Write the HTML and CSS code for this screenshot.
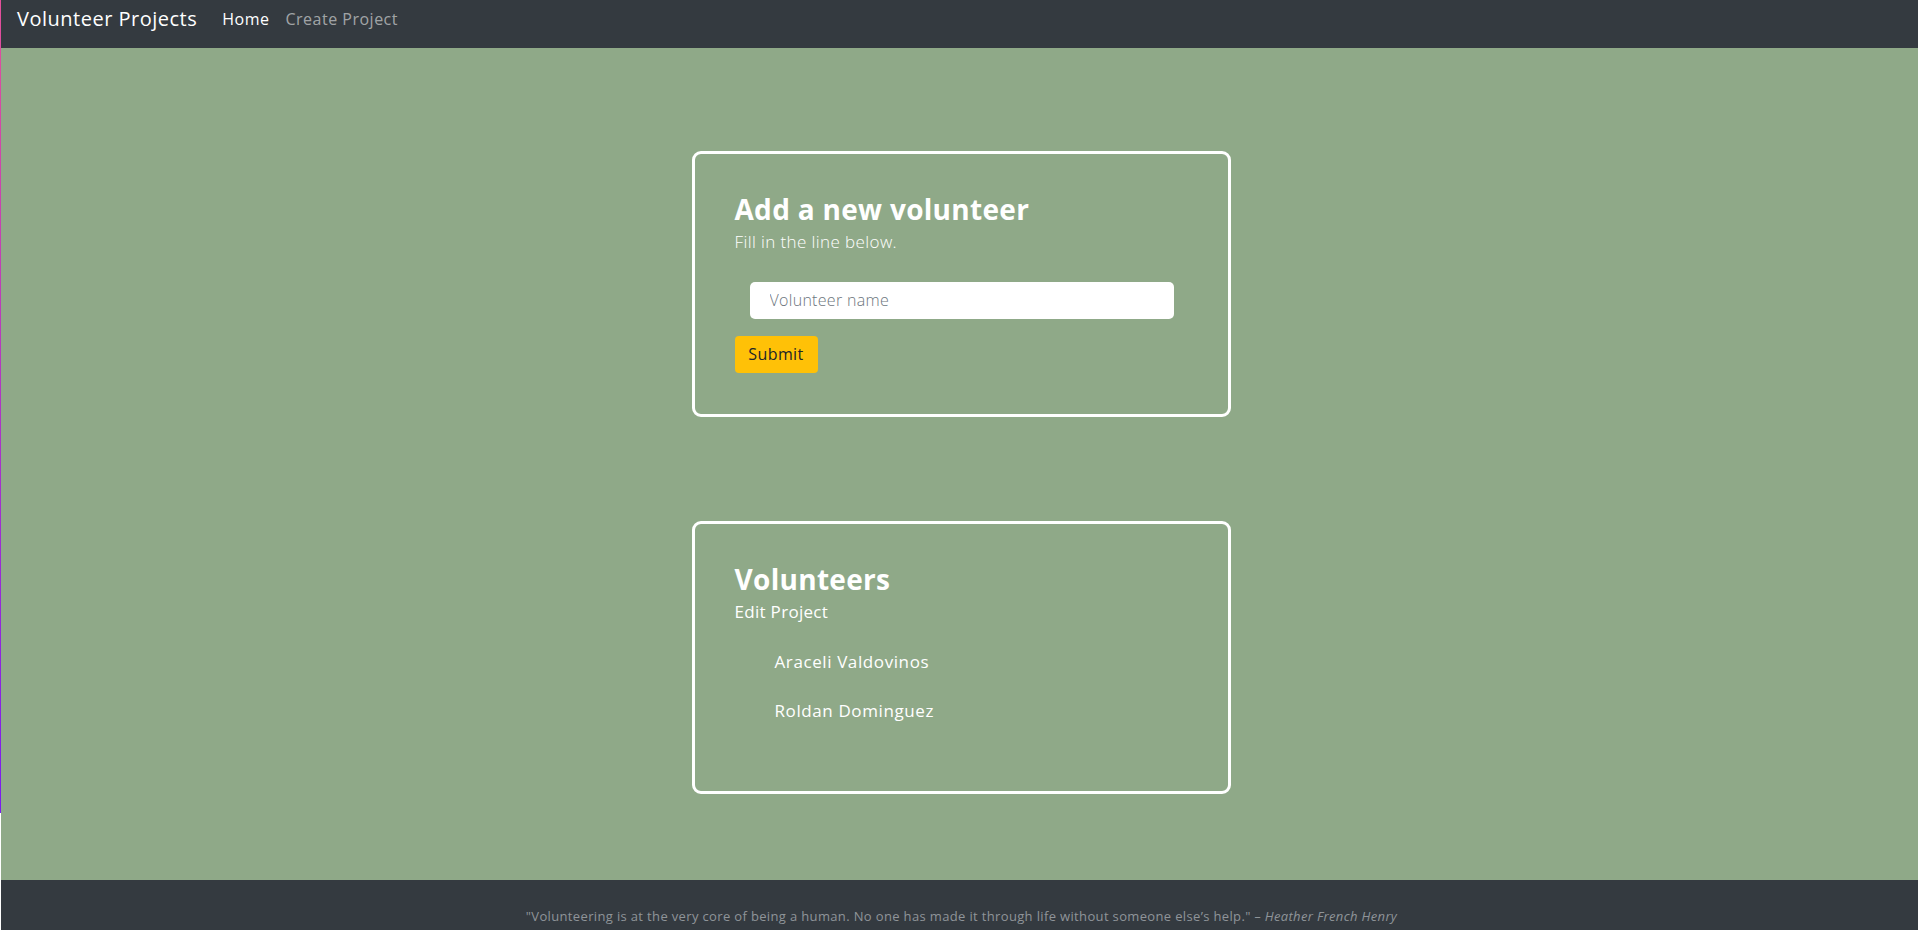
FILE: index.html
```html
<!DOCTYPE html>
<html lang="en">
<head>
<meta charset="utf-8">
<title>Volunteer Projects</title>
<link rel="stylesheet" href="styles.css">
</head>
<body>
<div class="page">
  <nav class="navbar">
    <a class="brand" href="#">Volunteer Projects</a>
    <ul class="nav">
      <li><a class="nav-link active" href="#">Home</a></li>
      <li><a class="nav-link" href="#">Create Project</a></li>
    </ul>
  </nav>
  <main class="main">
    <section class="card card-add">
      <h3 class="card-title">Add a new volunteer</h3>
      <p class="card-sub light">Fill in the line below.</p>
      <form class="vol-form">
        <input class="vol-input" type="text" placeholder="Volunteer name">
        <button class="btn-submit" type="button">Submit</button>
      </form>
    </section>
    <section class="card card-list">
      <h3 class="card-title">Volunteers</h3>
      <p class="card-sub">Edit Project</p>
      <ul class="vol-list">
        <li>Araceli Valdovinos</li>
        <li>Roldan Dominguez</li>
      </ul>
    </section>
  </main>
  <footer class="footer">
    <p class="quote">"Volunteering is at the very core of being a human. No one has made it through life without someone else’s help." <em>– Heather French Henry</em></p>
  </footer>
</div>
</body>
</html>
```

FILE: styles.css
```css
* { box-sizing: border-box; }
html, body { margin: 0; padding: 0; background: #ffffff; }
body {
  font-family: "Open Sans", "Noto Sans", sans-serif;
  padding-left: 1px;
  position: relative;
  color: #ffffff;
}
body::before {
  content: "";
  position: absolute;
  left: 0;
  top: 0;
  width: 1px;
  height: 813px;
  background: linear-gradient(to bottom, #e4509a, #7a1cf0);
}
.page { display: flex; flex-direction: column; }

.navbar {
  height: 48px;
  background: #343a40;
  display: flex;
  align-items: flex-start;
  padding: 4px 0 0 16px;
}
.brand {
  font-size: 20px;
  line-height: 30px;
  letter-spacing: 0.5px;
  color: #ffffff;
  text-decoration: none;
  margin-right: 17px;
}
.nav {
  list-style: none;
  margin: 3px 0 0;
  padding: 0;
  display: flex;
}
.nav-link {
  display: block;
  font-size: 16px;
  line-height: 24px;
  letter-spacing: 0.5px;
  padding: 0 8px;
  color: rgba(255, 255, 255, 0.55);
  text-decoration: none;
}
.nav-link.active { color: #ffffff; }

.main {
  background: #8fa988;
  padding: 103px 0 86px 3px;
  display: flex;
  flex-direction: column;
  align-items: center;
  gap: 104px;
}
.card {
  width: 539px;
  border: 3px solid #ffffff;
  border-radius: 9px;
  padding: 39px 40px 40px;
}
.card-add { height: 266px; }
.card-list { height: 273px; }
.card-title {
  margin: 0 0 3px;
  font-size: 28px;
  line-height: 1.2;
  font-weight: 700;
  letter-spacing: 0.3px;
}
.card-sub {
  margin: 0;
  font-size: 17px;
  line-height: 24px;
  letter-spacing: 0.3px;
}
.card-sub.light { font-weight: 300; letter-spacing: 0.4px; }

.vol-form {
  margin-top: 28px;
  display: flex;
  flex-direction: column;
  align-items: flex-start;
  gap: 17px;
}
.vol-input {
  margin-left: 15px;
  width: 424px;
  height: 37px;
  border: none;
  border-radius: 5px;
  background: #ffffff;
  padding: 0 20px;
  font-family: inherit;
  font-size: 16px;
  font-weight: 300;
  letter-spacing: 0.3px;
  color: #212529;
  outline: none;
}
.vol-input::placeholder { color: #6c757d; }
.btn-submit {
  width: 83px;
  height: 37px;
  border: none;
  border-radius: 4px;
  background: #ffc107;
  color: #212529;
  font-family: inherit;
  font-size: 16px;
  letter-spacing: 0.4px;
  padding: 0;
  cursor: pointer;
}

.vol-list {
  list-style: none;
  margin: 14px 0 0;
  padding: 0 0 0 40px;
}
.vol-list li {
  font-size: 17px;
  line-height: 24px;
  letter-spacing: 0.6px;
  padding: 12px 0 13px;
}

.footer {
  background: #343a40;
  height: 50px;
  padding: 26px 0 0 4px;
}
.quote {
  margin: 0;
  text-align: center;
  font-size: 13px;
  line-height: 20px;
  letter-spacing: 0.35px;
  color: #8f9499;
}
.quote em { font-style: italic; }
```
